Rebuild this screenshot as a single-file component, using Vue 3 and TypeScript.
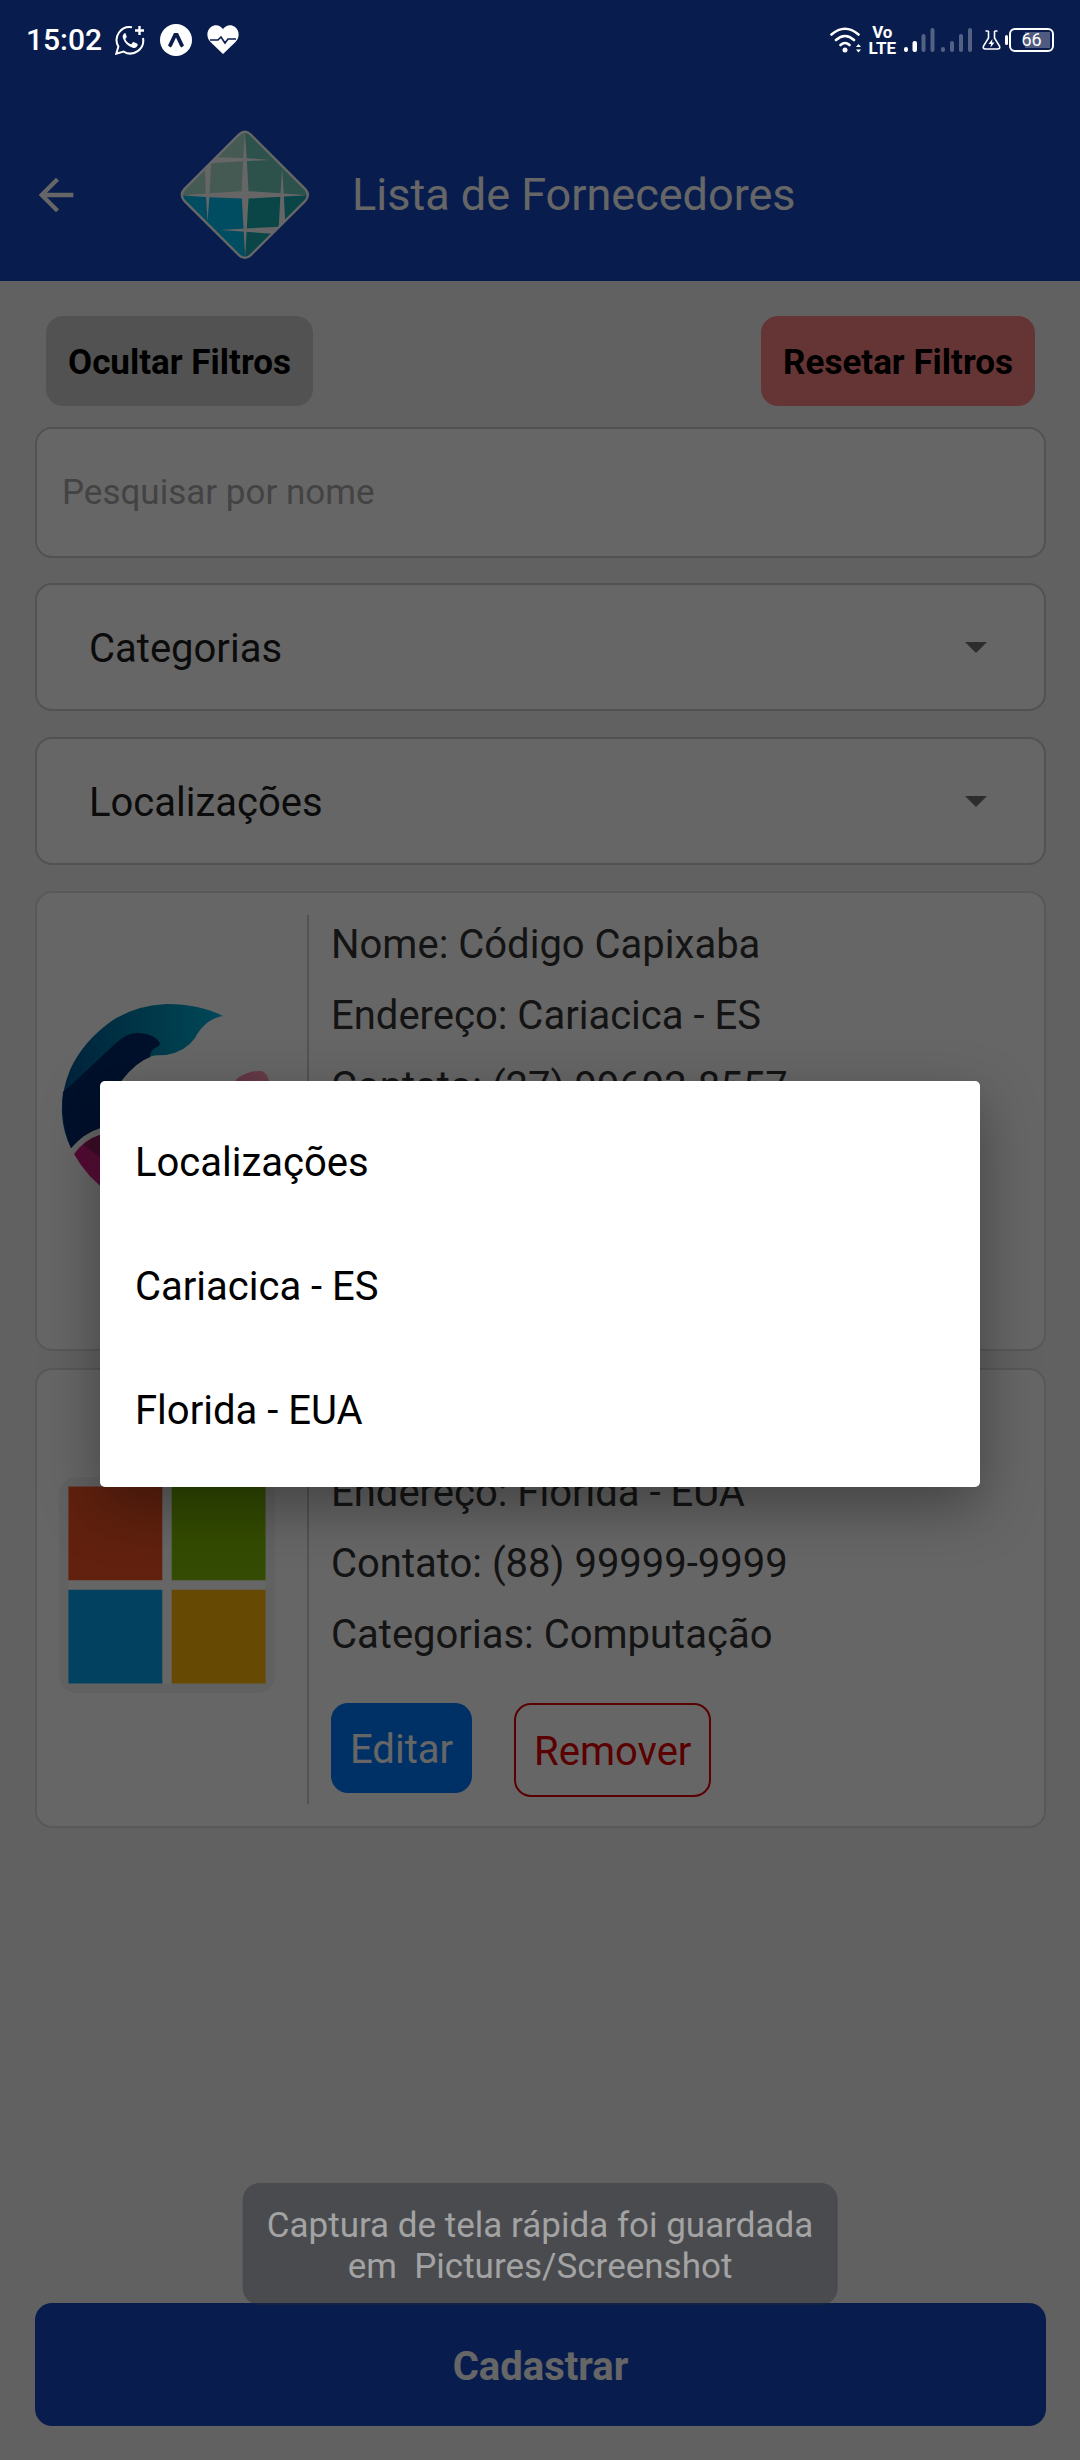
<script setup lang="ts">
import { ref } from 'vue'

interface Fornecedor {
  nome: string
  endereco: string
  contato: string
  categorias: string
  logo: 'capixaba' | 'janelas'
}

const busca = ref('')
const categoria = ref('Categorias')
const local = ref('Localizações')
const aberto = ref(true)
const aviso = ref('Captura de tela rápida foi guardada\nem  Pictures/Screenshot')

const locais: string[] = ['Localizações', 'Cariacica - ES', 'Florida - EUA']
const categorias: string[] = ['Categorias', 'Computação']

const fornecedores: Fornecedor[] = [
  { nome: 'Código Capixaba', endereco: 'Cariacica - ES', contato: '(27) 99692-8557', categorias: 'Computação', logo: 'capixaba' },
  { nome: 'Microsoft', endereco: 'Florida - EUA', contato: '(88) 99999-9999', categorias: 'Computação', logo: 'janelas' },
]

function escolher(item: string): void {
  local.value = item
  aberto.value = false
}
</script>

<template>
  <div class="screen">
    <header class="topbar">
      <button class="back" type="button" aria-label="Voltar">
        <svg viewBox="0 0 24 24" width="52" height="52" fill="#fff"><path d="M20 11H7.83l5.59-5.59L12 4l-8 8 8 8 1.41-1.41L7.83 13H20z" /></svg>
      </button>
      <svg class="brand" viewBox="60 60 387 387" aria-hidden="true">
        <clipPath id="losango"><path d="M234 72Q253 56 272 72L435 235Q449 253 435 272L272 435Q253 449 234 435L71 272Q57 253 71 235Z" /></clipPath>
        <g clip-path="url(#losango)">
          <path fill="#afe1d2" d="M60 60h194v194H60z" />
          <path fill="#71cbbc" d="M254 60h193v194H254z" />
          <path fill="#00bef0" d="M60 254h194v193H60z" />
          <path fill="#19adb4" d="M254 254h193v193H254z" />
          <g fill="#fff">
            <path d="M253 62L259 150L264 242L360 248L440 254L360 259L264 264L259 350L254 440L249 350L244 264L145 260L64 254L145 248L243 242L248 150Z" />
            <path d="M172 141L248 143L328 149L248 153L150 159Z" />
            <path d="M134 175L153 155L148 250L142 334L137 250Z" />
            <path d="M364 172L369 254L373 330L354 350L359 254Z" />
            <path d="M180 358L254 353L358 348L336 369L254 363Z" />
          </g>
        </g>
        <path fill="none" stroke="#fff" stroke-width="7" d="M236 73Q253 58 270 73L433 236Q448 253 433 271L270 433Q253 448 236 433L73 271Q58 253 73 236Z" />
      </svg>
      <h1 class="title">Lista de Fornecedores</h1>
    </header>

    <main class="content">
      <div class="filter-actions">
        <button class="chip" type="button">Ocultar Filtros</button>
        <button class="chip chip-reset" type="button">Resetar Filtros</button>
      </div>
      <input v-model="busca" class="search" type="text" placeholder="Pesquisar por nome" aria-label="Pesquisar por nome" />
      <div class="picker">
        <select v-model="categoria" aria-label="Categorias">
          <option v-for="c in categorias" :key="c">{{ c }}</option>
        </select>
        <svg class="caret" viewBox="0 0 22 12" width="22" height="12" fill="#707070" aria-hidden="true"><path d="M0 0h22L11 11z" /></svg>
      </div>
      <div class="picker">
        <select v-model="local" aria-label="Localizações">
          <option v-for="l in locais" :key="l">{{ l }}</option>
        </select>
        <svg class="caret" viewBox="0 0 22 12" width="22" height="12" fill="#707070" aria-hidden="true"><path d="M0 0h22L11 11z" /></svg>
      </div>

      <ul class="list">
        <li v-for="f in fornecedores" :key="f.nome" class="card">
          <div class="picture">
            <svg v-if="f.logo === 'capixaba'" viewBox="0 0 216 216" aria-hidden="true">
              <defs>
                <linearGradient id="azul"><stop offset="0" stop-color="#005794" /><stop offset=".55" stop-color="#008cb4" /><stop offset="1" stop-color="#00b4dc" /></linearGradient>
                <linearGradient id="rosa"><stop offset="0" stop-color="#d21482" /><stop offset="1" stop-color="#ff9cb4" /></linearGradient>
              </defs>
              <path fill="url(#azul)" d="M164 16Q140 4 108 4Q78 5 54 20Q24 41 11 70Q2 92 3 114Q4 132 12 148Q25 133 41 128Q48 101 63 80Q77 62 93 56Q98 55 107 55Q126 52 136 38Q146 19 164 16Z" />
              <path fill="#00296b" d="M4 92Q16 82 28 70L56 44Q68 32 80 33Q96 34 101 43Q101 46 96 48Q91 51 91 57Q77 62 63 80Q48 101 41 128Q25 133 12 148Q1 122 4 92Z" />
              <path fill="url(#rosa)" d="M15 154Q26 139 41 135Q68 176 115 172Q152 166 166 110Q169 86 180 77Q192 70 203 71Q208 73 210 81Q214 140 176 180Q140 214 100 211Q42 202 15 154Z" />
              <path fill="#961e64" d="M24 145Q32 138 41 135Q60 164 90 171Q66 171 41 157Z" />
            </svg>
            <svg v-else viewBox="0 0 23 23" aria-hidden="true">
              <path fill="#f3f3f3" d="M0 0h23v23H0z" />
              <path fill="#fff" d="M1 1h21v21H1z" />
              <path fill="#f35325" d="M1 1h10v10H1z" />
              <path fill="#81bc06" d="M12 1h10v10H12z" />
              <path fill="#05a6f0" d="M1 12h10v10H1z" />
              <path fill="#ffba08" d="M12 12h10v10H12z" />
            </svg>
          </div>
          <div class="info">
            <p>Nome: {{ f.nome }}</p>
            <p>Endereço: {{ f.endereco }}</p>
            <p>Contato: {{ f.contato }}</p>
            <p>Categorias: {{ f.categorias }}</p>
            <div class="card-actions">
              <button class="edit" type="button">Editar</button>
              <button class="remove" type="button">Remover</button>
            </div>
          </div>
        </li>
      </ul>
    </main>

    <footer class="footer">
      <button class="submit" type="button">Cadastrar</button>
    </footer>

    <div v-if="aberto" class="scrim">
      <div class="dialog" role="listbox" aria-label="Localizações">
        <button v-for="l in locais" :key="l" type="button" role="option" :aria-selected="l === local" @click="escolher(l)">{{ l }}</button>
      </div>
    </div>

    <div class="statusbar">
      <span class="time">15:02</span>
      <div class="notices">
        <svg viewBox="0 0 30 30" width="30" height="30" fill="none" stroke="#fff" stroke-width="2">
          <path d="M17 2.200A13 13 0 0 0 3.400 21.500L1.300 28.700L8.600 26.600A13 13 0 0 0 28 13" />
          <path stroke-width="2.400" d="M24.500 1v9M20 5.500h9" />
          <path fill="#fff" stroke="none" d="M9.600 8.200c-1.800 1-2.300 3-1.600 5 1.600 4.700 5 8 9.700 9.500 2.200.7 4.300-.3 4.900-2.400.2-1 0-1.300-.8-1.700l-2.700-1.400c-.7-.3-1-.2-1.500.4l-1 1.300c-.4.400-.7.500-1.200.2-2.200-1-3.800-2.500-4.900-4.500-.3-.5-.2-.8.200-1.200l.8-1c.3-.4.300-.7.100-1.200l-1.100-2.700c-.2-.4-.5-.5-.9-.3z" />
        </svg>
        <svg viewBox="0 0 32 32" width="32" height="32">
          <circle cx="16" cy="16" r="16" fill="#fff" />
          <path fill="#081d4e" d="M14 9h4l6 12.500-2.500 2-1.500-1.500-4-8.500-4 8.500-1.500 1.500-2.500-2z" />
        </svg>
        <svg viewBox="0 0 32 29" width="32" height="29">
          <path fill="#fff" d="M16 29L3.500 17C-1 12 -.5 5.500 4 2 8-1 13 0 16 4 19 0 24-1 28 2c4.500 3.500 5 10 .5 15z" />
          <path fill="none" stroke="#081d4e" stroke-width="1.600" d="M3 15h8l3-3 4 6 3-4h8" />
        </svg>
      </div>
      <div class="system">
        <svg viewBox="0 0 32 26" width="32" height="26" fill="none" stroke="#fff" stroke-width="2.600" stroke-linecap="round">
          <path d="M1.500 7.500Q15 -4 28.500 7.500M6 13Q15 5 24 13M10.500 18Q15 14 19.500 18" />
          <circle cx="15" cy="23" r="2.500" fill="#fff" stroke="none" />
          <path fill="#fff" stroke="none" d="M26 20l2.500-3 2.500 3zM26 22.500h5L28.500 25.500z" />
        </svg>
        <span class="volte"><span>Vo</span><span>LTE</span></span>
        <svg class="bars" viewBox="0 0 68 24" width="68" height="24" fill="#fff">
          <rect y="19" width="4" height="5" rx="2" /><rect x="8.500" y="13" width="4.500" height="11" rx="2" />
          <g opacity=".3"><rect x="17.500" y="6" width="4" height="18" rx="2" /><rect x="26.500" width="4" height="24" rx="2" />
            <rect x="37" y="19" width="4" height="5" rx="2" /><rect x="46" y="13" width="4" height="11" rx="2" /><rect x="55" y="6" width="4" height="18" rx="2" /><rect x="64" width="4" height="24" rx="2" /></g>
        </svg>
        <svg class="flask" viewBox="0 0 19 20" width="19" height="20" fill="none" stroke="#fff" stroke-width="1.600">
          <path d="M3.500 1h3M12.500 1h3M6.500 1v7L1.500 16Q.5 19 3.500 19h12Q18.500 19 17.500 16L12.500 8V1" />
          <path fill="#fff" stroke="none" d="M10.500 9l-4 5h2.500l-.5 3.500 4-5H10z" />
        </svg>
        <span class="battery"><span class="nub"></span><span class="cell">66</span></span>
      </div>
    </div>

    <div class="toast" role="status">{{ aviso }}</div>
  </div>
</template>

<style>
body {
  margin: 0;
  background: #f2f2f2;
}
</style>

<style scoped>
.screen {
  position: relative;
  display: flex;
  flex-direction: column;
  min-height: 100vh;
  background: #f2f2f2;
  color: #333;
  font-family: Roboto, "Noto Sans", sans-serif;
  font-size: 40px;
}
.screen *,
.screen {
  box-sizing: border-box;
}
button,
input,
select {
  margin: 0;
  padding: 0;
  border: 0;
  font: inherit;
  color: inherit;
}
svg {
  display: block;
  flex: none;
}

.topbar {
  display: flex;
  align-items: center;
  height: 281px;
  padding: 108px 30px 0;
  background: #144ac4;
  color: #fff;
}
.back {
  background: none;
}
.brand {
  width: 130px;
  height: 130px;
  margin: 0 42px 0 98px;
}
.title {
  margin: 0;
  font-size: 45px;
  font-weight: 400;
  line-height: 56px;
}

.content {
  padding: 35px 34px 35px 35px;
}
.filter-actions {
  display: flex;
  justify-content: space-between;
  padding: 0 11px;
  margin-bottom: 21px;
}
.chip {
  height: 90px;
  padding: 2px 22px 0;
  border-radius: 17px;
  background: #ccc;
  color: #000;
  font-size: 35px;
  font-weight: 700;
}
.chip-reset {
  background: #fc8383;
}
.search {
  display: block;
  width: 100%;
  height: 131px;
  margin-bottom: 25px;
  padding: 0 25px;
  border: 2px solid #ccc;
  border-radius: 17px;
  background: #fff;
  font-size: 35px;
}
.search::placeholder {
  color: #a8a8a8;
  opacity: 1;
}
.picker {
  position: relative;
  margin-bottom: 26px;
}
.picker select {
  display: block;
  width: 100%;
  height: 128px;
  padding: 3px 52px 0;
  border: 2px solid #ccc;
  border-radius: 17px;
  appearance: none;
  background: #fff;
  color: #1c1c1c;
}
.caret {
  position: absolute;
  top: 59px;
  right: 59px;
}

.list {
  display: flex;
  flex-direction: column;
  gap: 17px;
  margin: 0;
  padding: 0;
  list-style: none;
}
.card {
  display: flex;
  padding: 22px;
  border: 2px solid #ddd;
  border-radius: 17px;
  background: #fff;
}
.picture {
  display: flex;
  align-items: center;
  padding: 0 32px 26px 0;
}
.picture svg {
  width: 216px;
  height: 216px;
  border-radius: 17px;
}
.info {
  flex: 1;
  padding: 7px 0 7px 22px;
  border-left: 2px solid #ccc;
}
.info p {
  margin: 0 0 25px;
  line-height: 46px;
}
.card-actions {
  display: flex;
  align-items: flex-start;
  gap: 42px;
  margin-top: 45px;
}
.edit {
  height: 90px;
  padding: 2px 19px 0;
  border-radius: 17px;
  background: #007bff;
  color: #fff;
}
.remove {
  height: 94px;
  padding: 2px 18px 0;
  border: 2px solid #e00000;
  border-radius: 17px;
  background: #fff;
  color: #e00000;
}

.footer {
  margin-top: auto;
  padding: 0 34px 34px 35px;
}
.submit {
  width: 100%;
  height: 123px;
  padding-top: 3px;
  border-radius: 17px;
  background: #144ac4;
  color: #fff;
  font-weight: 700;
}

.scrim {
  position: absolute;
  inset: 0;
  display: flex;
  flex-direction: column;
  justify-content: center;
  padding: 108px 100px 0;
  background: rgba(0, 0, 0, 0.6);
}
.dialog {
  display: flex;
  flex-direction: column;
  padding: 17px 0;
  border-radius: 5px;
  background: #fff;
  box-shadow: 0 20px 56px rgba(0, 0, 0, 0.35);
}
.dialog button {
  height: 124px;
  padding: 4px 35px 0;
  background: none;
  color: #000;
  text-align: left;
}

.statusbar {
  position: absolute;
  top: 0;
  left: 0;
  right: 0;
  display: flex;
  align-items: center;
  height: 79px;
  padding: 0 26px;
  color: #fff;
}
.time {
  font-size: 30px;
  font-weight: 500;
}
.notices {
  display: flex;
  align-items: center;
  gap: 15px;
  margin-left: 13px;
}
.system {
  display: flex;
  align-items: center;
  margin-left: auto;
}
.volte {
  display: flex;
  flex-direction: column;
  align-items: center;
  margin: 0 8px 0 7px;
  font-size: 17px;
  font-weight: 700;
  line-height: 16px;
}
.flask {
  margin: 0 4px 0 10px;
}
.battery {
  display: flex;
  align-items: center;
}
.nub {
  width: 3px;
  height: 10px;
  border-radius: 2px;
  background: #fff;
}
.cell {
  width: 45px;
  margin-left: 1px;
  border: 2px solid #fff;
  border-radius: 6px;
  background: linear-gradient(#4f5b80, #4f5b80) 14px 2px / 25px 16px no-repeat;
  font-size: 18px;
  font-weight: 400;
  line-height: 20px;
  text-align: center;
}

.toast {
  position: absolute;
  bottom: 155px;
  left: 50%;
  transform: translateX(-50%);
  padding: 22px 24px 18px;
  border-radius: 17px;
  background: rgba(40, 42, 52, 0.4);
  color: #a3a3a3;
  font-size: 35px;
  line-height: 41px;
  text-align: center;
  white-space: pre;
}
</style>
